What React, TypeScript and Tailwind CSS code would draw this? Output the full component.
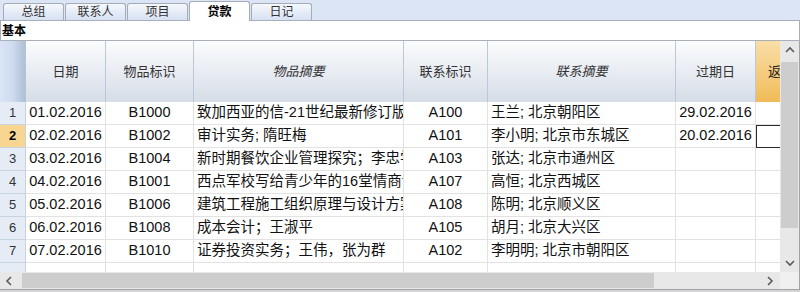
import React from "react";

interface Row {
  n: number;
  date: string;
  item: string;
  itemDesc: string;
  contact: string;
  contactDesc: string;
  due: string;
}

const rows: Row[] = [
  { n: 1, date: "01.02.2016", item: "B1000", itemDesc: "致加西亚的信-21世纪最新修订版本", contact: "A100", contactDesc: "王兰; 北京朝阳区", due: "29.02.2016" },
  { n: 2, date: "02.02.2016", item: "B1002", itemDesc: "审计实务; 隋旺梅", contact: "A101", contactDesc: "李小明; 北京市东城区", due: "20.02.2016" },
  { n: 3, date: "03.02.2016", item: "B1004", itemDesc: "新时期餐饮企业管理探究；李忠学", contact: "A103", contactDesc: "张达; 北京市通州区", due: "" },
  { n: 4, date: "04.02.2016", item: "B1001", itemDesc: "西点军校写给青少年的16堂情商课", contact: "A107", contactDesc: "高恒; 北京西城区", due: "" },
  { n: 5, date: "05.02.2016", item: "B1006", itemDesc: "建筑工程施工组织原理与设计方案", contact: "A108", contactDesc: "陈明; 北京顺义区", due: "" },
  { n: 6, date: "06.02.2016", item: "B1008", itemDesc: "成本会计；王淑平", contact: "A105", contactDesc: "胡月; 北京大兴区", due: "" },
  { n: 7, date: "07.02.2016", item: "B1010", itemDesc: "证券投资实务；王伟，张为群", contact: "A102", contactDesc: "李明明; 北京市朝阳区", due: "" },
];

const tabs = ["总组", "联系人", "项目", "贷款", "日记"];

function Chevron({ dir }: { dir: "up" | "down" | "left" | "right" }) {
  const d = {
    up: "M2 7 L6 3 L10 7",
    down: "M2 4 L6 8 L10 4",
    left: "M7 2 L3 6 L7 10",
    right: "M4 2 L8 6 L4 10",
  }[dir];
  return (
    <svg width="12" height="12" viewBox="0 0 12 12">
      <path d={d} fill="none" stroke="#5a5a5a" strokeWidth="1.6" />
    </svg>
  );
}

const headCell = "h-full flex items-center justify-center border-r border-[#bcc8d8] bg-gradient-to-b from-[#fbfcfd] to-[#d6dde8] text-[13px] text-[#333]";
const cell = "h-full flex items-center border-r border-b border-[#e2e2e2] overflow-hidden whitespace-nowrap text-[14.5px] text-[#111]";

export default function App() {
  return (
    <div className="w-[800px] h-[292px] bg-[#dbe5f5] overflow-hidden font-['Liberation_Sans','Noto_Sans_CJK_SC',sans-serif] flex flex-col">
      {/* tabs */}
      <div className="h-[20px] flex items-end pl-[3px] gap-px shrink-0">
        {tabs.map((t) =>
          t === "贷款" ? (
            <div key={t} className="w-[61px] h-[20px] mb-[-1px] z-10 bg-white border border-b-0 border-[#a4acb8] rounded-t-[3px] flex items-center justify-center text-[12px] font-bold text-black">
              {t}
            </div>
          ) : (
            <div key={t} className="w-[61px] h-[17px] border border-b-0 border-[#a4acb8] rounded-t-[3px] bg-gradient-to-b from-[#f6f8fc] to-[#d6e1f3] flex items-center justify-center text-[12px] text-[#333]">
              {t}
            </div>
          )
        )}
      </div>

      {/* section label */}
      <div className="h-[21px] shrink-0 bg-white border border-[#a9b0ba] flex items-center pl-[1px] text-[12px] font-bold text-black">
        基本
      </div>

      {/* grid + scrollbars */}
      <div className="h-[248px] shrink-0 flex border-r border-[#9fa4aa] bg-white">
        <div className="w-[780px] flex flex-col">
          <div className="h-[231px] overflow-hidden">
            <div className="w-[832px]">
              {/* header */}
              <div className="h-[61px] flex">
                <div className="w-[26px] h-full border-r border-[#b7c4d6] bg-gradient-to-r from-[#dae5f5] via-[#cfdcf0] to-[#aebfd6]" />
                <div className={`w-[80px] ${headCell}`}>日期</div>
                <div className={`w-[88px] ${headCell}`}>物品标识</div>
                <div className={`w-[210px] ${headCell} italic`}>物品摘要</div>
                <div className={`w-[84px] ${headCell}`}>联系标识</div>
                <div className={`w-[188px] ${headCell} italic`}>联系摘要</div>
                <div className={`w-[80px] ${headCell}`}>过期日</div>
                <div className="w-[76px] h-full flex items-center justify-center bg-gradient-to-b from-[#f9dea6] to-[#f0bb55] text-[13px] text-[#222]">
                  返还日期
                </div>
              </div>

              {/* rows */}
              {rows.map((r) => (
                <div key={r.n} className="h-[23px] flex">
                  <div
                    className={`w-[26px] h-full flex items-center justify-center border-r border-b border-[#c9d3e0] text-[13px] ${
                      r.n === 2 ? "bg-[#f9d592] font-bold text-black" : "bg-[#e5ecf6] text-[#333]"
                    }`}
                  >
                    {r.n}
                  </div>
                  <div className={`w-[80px] justify-center ${cell}`}>{r.date}</div>
                  <div className={`w-[88px] justify-center ${cell}`}>{r.item}</div>
                  <div className={`w-[210px] pl-[3px] ${cell}`}>{r.itemDesc}</div>
                  <div className={`w-[84px] justify-center ${cell}`}>{r.contact}</div>
                  <div className={`w-[188px] pl-[3px] ${cell}`}>{r.contactDesc}</div>
                  <div className={`w-[80px] justify-center ${cell}`}>{r.due}</div>
                  {r.n === 2 ? (
                    <div className="w-[76px] h-full border border-[#2a2a2a]" />
                  ) : (
                    <div className="w-[76px] h-full border-b border-[#e2e2e2]" />
                  )}
                </div>
              ))}

              {/* partial row */}
              <div className="h-[9px] flex">
                <div className="w-[26px] h-full border-r border-[#c9d3e0] bg-[#e5ecf6]" />
                <div className="w-[80px] h-full border-r border-[#e2e2e2]" />
                <div className="w-[88px] h-full border-r border-[#e2e2e2]" />
                <div className="w-[210px] h-full border-r border-[#e2e2e2]" />
                <div className="w-[84px] h-full border-r border-[#e2e2e2]" />
                <div className="w-[188px] h-full border-r border-[#e2e2e2]" />
                <div className="w-[80px] h-full border-r border-[#e2e2e2]" />
              </div>
            </div>
          </div>

          {/* horizontal scrollbar */}
          <div className="h-[17px] flex items-center bg-[#e8e8e8]">
            <div className="w-[20px] flex justify-center">
              <Chevron dir="left" />
            </div>
            <div className="w-[632px] h-[15px] ml-[2px] bg-[#cdcdcd]" />
            <div className="flex-1" />
            <div className="w-[20px] flex justify-center">
              <Chevron dir="right" />
            </div>
          </div>
        </div>

        {/* vertical scrollbar */}
        <div className="w-[19px] flex flex-col bg-[#e8e8e8]">
          <div className="h-[19px] flex items-center justify-center">
            <Chevron dir="up" />
          </div>
          <div className="h-[166px] mx-[1px] mt-[2px] bg-[#cdcdcd]" />
          <div className="flex-1" />
          <div className="h-[19px] flex items-center justify-center">
            <Chevron dir="down" />
          </div>
          <div className="h-[17px] bg-[#f0f0f0]" />
        </div>
      </div>

      <div className="flex-1 bg-[#d4d4d4] border-t border-[#9fa4aa]" />
    </div>
  );
}
